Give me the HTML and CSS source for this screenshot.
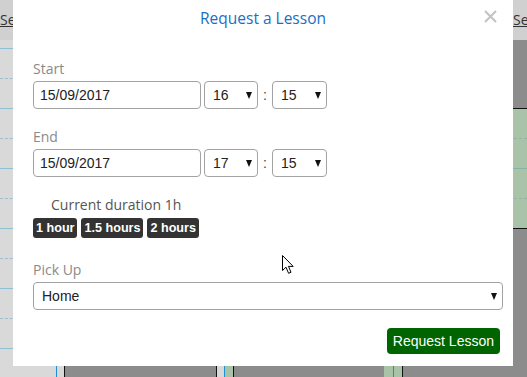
FILE: index.html
```html
<!DOCTYPE html>
<html>
<head>
<meta charset="utf-8">
<link rel="stylesheet" href="styles.css">
</head>
<body>
<div class="backdrop">
  <div class="cal-head">
    <div class="head-cell head-left"><a href="#">Select</a></div>
    <div class="head-cell head-right"><a href="#">Select</a></div>
  </div>
  <div class="cal-body">
    <div class="col col-time">
      <div class="slot slot-first"></div>
      <div class="slot dashed"></div>
      <div class="slot"></div>
      <div class="slot dashed"></div>
      <div class="slot"></div>
      <div class="slot dashed"></div>
      <div class="slot"></div>
      <div class="slot dashed"></div>
      <div class="slot"></div>
      <div class="slot dashed"></div>
      <div class="slot"></div>
    </div>
    <div class="col col-a"></div>
    <div class="col col-gray col-w152"></div>
    <div class="col col-b"></div>
    <div class="col col-gray col-w150"></div>
    <div class="col col-c"></div>
    <div class="col col-gray col-last">
      <div class="event">
        <div class="ev-slot dashed"></div>
        <div class="ev-slot"></div>
        <div class="ev-slot dashed"></div>
        <div class="ev-slot ev-end"></div>
      </div>
    </div>
  </div>
</div>

<div class="modal">
  <div class="modal-head">
    <h4 class="modal-title">Request a Lesson</h4>
    <button class="close" type="button" aria-label="Close">
      <svg width="13" height="13" viewBox="0 0 13 13"><path d="M1 1 L12 12 M12 1 L1 12" stroke="#c2c2c2" stroke-width="2" fill="none"/></svg>
    </button>
  </div>
  <div class="modal-body">
    <div class="group">
      <label class="label">Start</label>
      <div class="row">
        <input class="date" type="text" value="15/09/2017">
        <span class="sel sel-time"><select><option>16</option></select></span>
        <span class="colon">:</span>
        <span class="sel sel-time sel-min"><select><option>15</option></select></span>
      </div>
    </div>
    <div class="group group-next">
      <label class="label">End</label>
      <div class="row">
        <input class="date" type="text" value="15/09/2017">
        <span class="sel sel-time"><select><option>17</option></select></span>
        <span class="colon">:</span>
        <span class="sel sel-time sel-min"><select><option>15</option></select></span>
      </div>
    </div>
    <div class="duration">Current duration 1h</div>
    <div class="quick">
      <span class="pill">1 hour</span>
      <span class="pill">1.5 hours</span>
      <span class="pill">2 hours</span>
    </div>
    <div class="group group-pick">
      <label class="label">Pick Up</label>
      <span class="sel sel-wide"><select><option>Home</option></select></span>
    </div>
    <div class="footer">
      <button class="submit" type="button">Request Lesson</button>
    </div>
  </div>
</div>

<svg class="cursor" width="13" height="20" viewBox="0 0 13 20">
  <path d="M0.5 0.5 L0.5 15.5 L4 12.2 L6.6 18.3 L9 17.3 L6.5 11.4 L11.2 11.4 Z" fill="#fff" stroke="#000" stroke-width="1" stroke-linejoin="miter"/>
</svg>
</body>
</html>
```

FILE: styles.css
```css
html, body {
  margin: 0;
  padding: 0;
}
body {
  width: 527px;
  height: 377px;
  overflow: hidden;
  position: relative;
  background: #d9d9d9;
  font-family: "Open Sans", "Liberation Sans", sans-serif;
}

/* ---------- backdrop calendar ---------- */
.backdrop {
  width: 527px;
  height: 377px;
  display: flex;
  flex-direction: column;
}
.cal-head {
  height: 40px;
  display: flex;
  background: #d0d0d0;
}
.head-cell {
  padding-top: 10px;
  font-size: 14px;
  line-height: 20px;
  white-space: nowrap;
}
.head-left {
  width: 513px;
  flex: none;
}
.head-right {
  flex: none;
}
.head-cell a {
  color: #333;
  text-decoration: underline;
}
.cal-body {
  flex: 1;
  display: flex;
}
.col {
  height: 100%;
  box-sizing: border-box;
  flex: none;
}
.col-time {
  width: 56px;
  background: #d9d9d9;
  display: flex;
  flex-direction: column;
}
.slot {
  box-sizing: border-box;
  height: 30px;
  flex: none;
  border-bottom: 1px solid #8fbfd2;
}
.slot-first {
  height: 9px;
}
.slot.dashed {
  border-bottom: 1px dashed #9fbccc;
}
.col-a {
  width: 9px;
  border-left: 1px solid #1e8fd0;
  border-right: 1px solid #111;
  background: #d9d9d9;
}
.col-gray {
  background: #8c8c8c;
}
.col-w152 {
  width: 152px;
  border-right: 1px solid #111;
}
.col-w150 {
  width: 150px;
}
.col-b {
  width: 17px;
  background: linear-gradient(to right, #d9d9d9 0 7px, #1e8fd0 7px 8px, #a9c3a9 8px 16px, #111 16px 17px);
}
.col-c {
  width: 19px;
  background: linear-gradient(to right, #a9c3a9 0 9px, #1e8fd0 9px 10px, #a9c3a9 10px 18px, #111 18px 19px);
}
.col-last {
  flex: 1;
  padding-top: 68px;
}
.event {
  background: #a9c3a9;
  border-top: 1px solid #111;
  display: flex;
  flex-direction: column;
}
.ev-slot {
  box-sizing: border-box;
  height: 30px;
  border-bottom: 1px solid #86b3a8;
}
.ev-slot.dashed {
  border-bottom: 1px dashed #93b3a3;
}
.ev-slot.ev-end {
  border-bottom: 1px solid #111;
}

/* ---------- modal ---------- */
.modal {
  position: absolute;
  left: 13px;
  top: 0;
  width: 500px;
  height: 366px;
  background: #fff;
  box-sizing: border-box;
}
.modal-head {
  padding-top: 8px;
  position: relative;
}
.modal-title {
  margin: 0;
  text-align: center;
  font-family: "Open Sans", sans-serif;
  font-weight: 500;
  font-size: 15.5px;
  line-height: 20px;
  color: #1b6ec2;
}
.close {
  position: absolute;
  right: 16px;
  top: 10px;
  width: 13px;
  height: 13px;
  padding: 0;
  border: 0;
  background: none;
  display: block;
}
.close svg {
  display: block;
}
.modal-body {
  padding: 31px 10px 0 20px;
  display: flex;
  flex-direction: column;
}
.group {
  display: flex;
  flex-direction: column;
  gap: 2px;
}
.group-next {
  margin-top: 18px;
}
.group-pick {
  margin-top: 22px;
}
.label {
  font-family: "Open Sans", sans-serif;
  font-size: 14px;
  line-height: 20px;
  color: #8a8a8a;
}
.row {
  display: flex;
  align-items: center;
}
.date {
  width: 168px;
  height: 28px;
  box-sizing: border-box;
  border: 1px solid #a3a3a3;
  border-radius: 4px;
  padding: 0 6px;
  font-family: "Liberation Sans", Arial, sans-serif;
  font-size: 14px;
  color: #222;
  margin: 0 3px 0 0;
  outline: none;
}
.sel {
  position: relative;
  display: block;
}
.sel select {
  appearance: none;
  -webkit-appearance: none;
  width: 100%;
  height: 28px;
  box-sizing: border-box;
  border: 1px solid #a3a3a3;
  border-radius: 4px;
  background: #fff;
  padding: 0 0 0 8px;
  font-family: "Liberation Sans", Arial, sans-serif;
  font-size: 14px;
  color: #222;
  display: block;
  margin: 0;
}
.sel::after {
  content: "";
  position: absolute;
  top: 11px;
  right: 6px;
  width: 0;
  height: 0;
  border-left: 3.5px solid transparent;
  border-right: 3.5px solid transparent;
  border-top: 7px solid #111;
  pointer-events: none;
}
.sel-time {
  width: 54px;
}
.sel-min {
  width: 55px;
}
.colon {
  width: 14px;
  text-align: center;
  font-family: "Liberation Sans", Arial, sans-serif;
  font-size: 14px;
  color: #444;
}
.sel-wide {
  width: 470px;
}
.duration {
  margin-top: 18px;
  padding-left: 18px;
  font-size: 14px;
  line-height: 20px;
  color: #555;
}
.quick {
  margin-top: 3px;
  display: flex;
  gap: 4px;
}
.pill {
  display: block;
  height: 20px;
  line-height: 20px;
  padding: 0 3px;
  background: #333;
  color: #fff;
  border-radius: 3px;
  font-family: "Liberation Sans", Arial, sans-serif;
  font-weight: bold;
  font-size: 12.6px;
}
.footer {
  margin-top: 18px;
  margin-right: 3px;
  display: flex;
  justify-content: flex-end;
}
.submit {
  height: 26px;
  padding: 0 6px;
  border: 0;
  border-radius: 4px;
  background: #006400;
  color: #fff;
  font-family: "Liberation Sans", Arial, sans-serif;
  font-size: 14px;
  line-height: 26px;
}

.cursor {
  position: absolute;
  left: 282px;
  top: 255px;
}
```
